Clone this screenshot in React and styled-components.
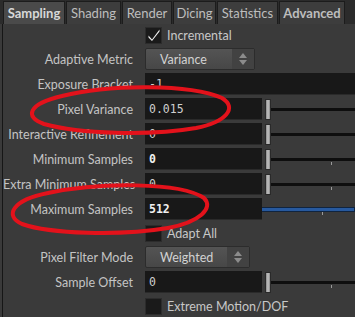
import React from 'react'
import styled, { createGlobalStyle } from 'styled-components'

const GlobalStyle = createGlobalStyle`
  html, body {
    margin: 0;
    padding: 0;
    background: #3a3a3a;
  }
  body {
    width: 355px;
    height: 317px;
    overflow: hidden;
    font-family: Lato, 'Open Sans', sans-serif;
  }
`

const Page = styled.div`
  position: relative;
  width: 355px;
  height: 317px;
  background: #3a3a3a;
  overflow: hidden;
`

const TabBar = styled.div`
  display: flex;
  height: 24px;
  padding: 1px 0 0 3px;
  box-sizing: border-box;
  background: #2b2b2b;
`

const Tab = styled.div`
  width: ${p => p.w}px;
  height: 23px;
  box-sizing: border-box;
  display: flex;
  align-items: center;
  justify-content: center;
  font-size: 13px;
  font-weight: ${p => (p.bold ? 700 : 400)};
  color: ${p => (p.active ? '#d8d8d8' : '#bdbdbd')};
  background: ${p => (p.active ? '#4a4a4a' : '#3d3d3d')};
  border: 1px solid #1c1c1c;
  border-bottom: none;
  margin-right: 1px;
`

const Panel = styled.div`
  margin-left: 2px;
  border-left: 1px solid #161616;
  height: 293px;
  padding-top: 1px;
  box-sizing: border-box;
  display: flex;
  flex-direction: column;
  gap: 3px;
`

const Row = styled.div`
  display: grid;
  grid-template-columns: 130px 1fr;
  column-gap: 12px;
  align-items: center;
  height: ${p => (p.short ? 20 : 22)}px;
`

const Label = styled.div`
  text-align: right;
  font-size: 12.5px;
  color: #c4c4c4;
  white-space: nowrap;
`

const Control = styled.div`
  display: flex;
  align-items: center;
  height: 100%;
`

const Field = styled.div`
  width: ${p => (p.full ? 'auto' : '117px')};
  flex: ${p => (p.full ? 1 : 'none')};
  height: 22px;
  box-sizing: border-box;
  background: #181818;
  border-bottom: 1px solid #2a2a2a;
  display: flex;
  align-items: center;
  padding-left: 4px;
  font-family: 'DejaVu Sans Mono', monospace;
  font-size: 11.5px;
  font-weight: ${p => (p.bold ? 700 : 400)};
  color: ${p => (p.bold ? '#f0f0f0' : '#cfcfcf')};
`

const Handle = styled.div`
  width: 6px;
  height: 21px;
  margin-left: 3px;
  box-sizing: border-box;
  background: linear-gradient(to right, #8a8a8a, #c4c4c4 50%, #8a8a8a);
  border: 1px solid #2a2a2a;
`

const Track = styled.div`
  position: relative;
  flex: 1;
  height: 22px;
  display: flex;
  flex-direction: column;
  justify-content: center;
  &::before {
    content: '';
    display: block;
    height: 3px;
    margin-top: 0px;
    background: ${p => (p.blue ? '#27599e' : '#0e0e0e')};
    border: ${p => (p.blue ? '1px solid #10243f' : 'none')};
    border-left: none;
  }
`

const Tick = styled.span`
  position: absolute;
  left: 60px;
  top: 14px;
  width: 1px;
  height: 3px;
  background: #9a9a9a;
`

const Dropdown = styled.div`
  width: ${p => p.w}px;
  height: 22px;
  box-sizing: border-box;
  display: flex;
  background: linear-gradient(#545454, #474747);
  border: 1px solid #2c2c2c;
  border-radius: 2px;
  font-size: 12.5px;
  color: #d2d2d2;
`

const DropText = styled.div`
  flex: 1;
  display: flex;
  align-items: center;
  padding-left: 14px;
`

const DropArrows = styled.div`
  width: 22px;
  display: flex;
  align-items: center;
  justify-content: center;
  background: #424242;
`

const CheckBox = styled.div`
  width: 17px;
  height: 17px;
  box-sizing: border-box;
  background: #1a1a1a;
  border: 1px solid #2c2c2c;
  display: flex;
  align-items: center;
  justify-content: center;
  margin-right: 5px;
`

const CheckText = styled.span`
  font-size: 12.5px;
  color: #c8c8c8;
`

const Marks = styled.svg`
  position: absolute;
  left: 0;
  top: 0;
  pointer-events: none;
`

const tabs = [
  { name: 'Sampling', w: 62, active: true, bold: true },
  { name: 'Shading', w: 55 },
  { name: 'Render', w: 50 },
  { name: 'Dicing', w: 43 },
  { name: 'Statistics', w: 61 },
  { name: 'Advanced', w: 66, bold: true },
]

const Arrows = () => (
  <svg width="8" height="12" viewBox="0 0 8 12">
    <path d="M4 0 L8 5 L0 5 Z" fill="#8c8c8c" />
    <path d="M0 7 L8 7 L4 12 Z" fill="#8c8c8c" />
  </svg>
)

const Check = () => (
  <svg width="14" height="14" viewBox="0 0 14 14">
    <path d="M1.5 7.5 L5 11.5 L12.5 1.5 L12.5 3.5 L5 13 L1.5 9.5 Z" fill="#f2f2f2" />
  </svg>
)

const Slider = ({ label, value, bold, tick, blue }) => (
  <Row>
    <Label>{label}</Label>
    <Control>
      <Field bold={bold}>{value}</Field>
      {blue ? null : <Handle />}
      <Track blue={blue}>{tick && <Tick />}</Track>
    </Control>
  </Row>
)

const Toggle = ({ label, checked }) => (
  <Row short>
    <span />
    <Control>
      <CheckBox>{checked && <Check />}</CheckBox>
      <CheckText>{label}</CheckText>
    </Control>
  </Row>
)

const Menu = ({ label, value, w }) => (
  <Row>
    <Label>{label}</Label>
    <Control>
      <Dropdown w={w}>
        <DropText>{value}</DropText>
        <DropArrows><Arrows /></DropArrows>
      </Dropdown>
    </Control>
  </Row>
)

export default function App() {
  return (
    <Page>
      <GlobalStyle />
      <TabBar>
        {tabs.map(t => (
          <Tab key={t.name} w={t.w} active={t.active} bold={t.bold}>
            {t.name}
          </Tab>
        ))}
      </TabBar>
      <Panel>
        <Toggle label="Incremental" checked />
        <Menu label="Adaptive Metric" value="Variance" w={110} />
        <Row>
          <Label>Exposure Bracket</Label>
          <Control>
            <Field full>-1</Field>
          </Control>
        </Row>
        <Slider label="Pixel Variance" value="0.015" />
        <Slider label="Interactive Refinement" value="0" />
        <Slider label="Minimum Samples" value="0" bold tick />
        <Slider label="Extra Minimum Samples" value="0" tick />
        <Slider label="Maximum Samples" value="512" bold tick blue />
        <Toggle label="Adapt All" />
        <Menu label="Pixel Filter Mode" value="Weighted" w={105} />
        <Slider label="Sample Offset" value="0" tick />
        <Toggle label="Extreme Motion/DOF" />
      </Panel>
      <Marks width="355" height="317" viewBox="0 0 355 317">
        <path
          d="M62 96 C110 84 190 84 222 98 C238 108 226 122 196 128 C150 136 80 134 44 124 C24 117 28 104 62 96"
          fill="none"
          stroke="#e3121b"
          strokeWidth="4"
          strokeLinecap="round"
        />
        <path
          d="M48 193 C100 182 180 182 204 198 C214 208 200 222 168 228 C120 236 50 234 22 224 C4 216 12 200 48 193"
          fill="none"
          stroke="#e3121b"
          strokeWidth="4"
          strokeLinecap="round"
        />
      </Marks>
    </Page>
  )
}
